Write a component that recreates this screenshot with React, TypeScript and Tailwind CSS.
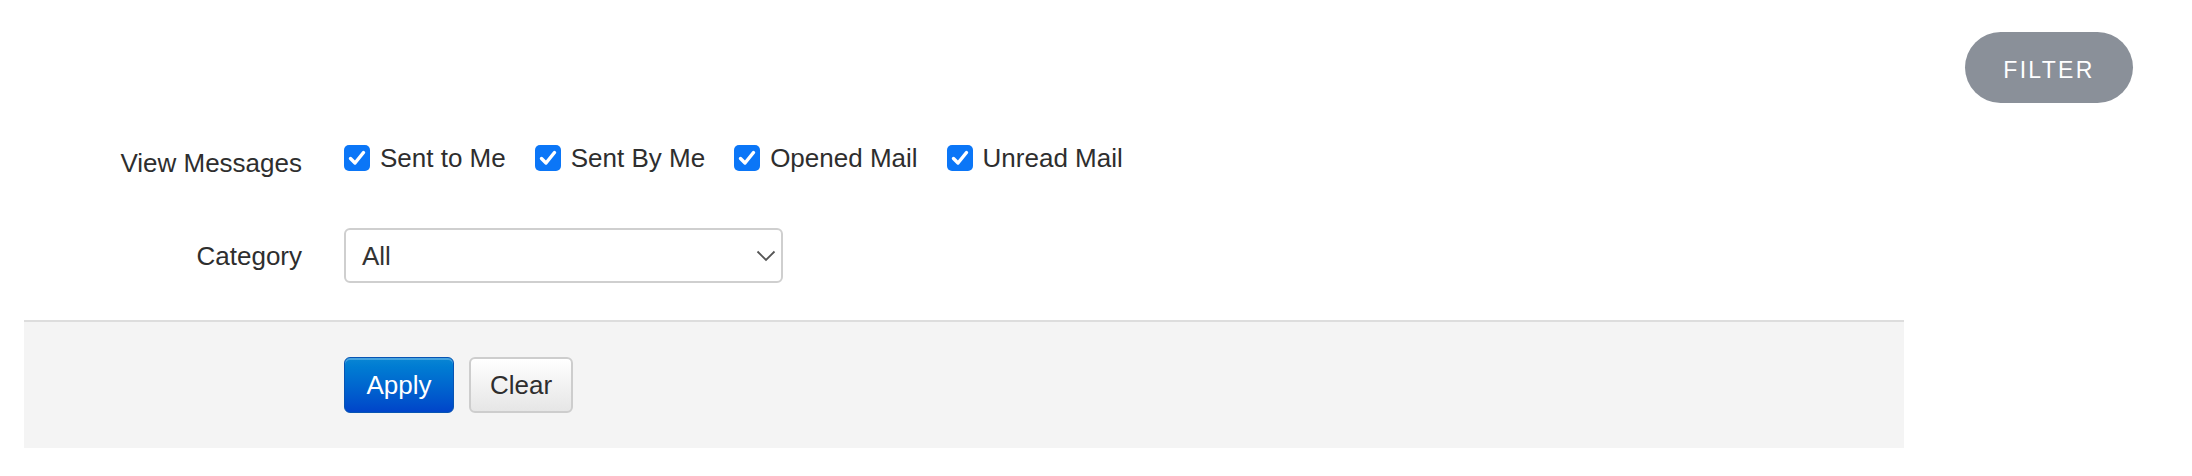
import React from 'react'

const font = { fontFamily: '"Liberation Sans", Arial, Helvetica, sans-serif' }

function Check({ label }: { label: string }) {
  return (
    <label className="mr-[29px] flex items-center">
      <span className="flex h-[26px] w-[26px] items-center justify-center rounded-[5px] bg-[#0b76f7]">
        <svg width="20" height="20" viewBox="0 0 20 20" fill="none">
          <path d="M3.5 10.5 L8 15 L16.5 4.5" stroke="#fff" strokeWidth="3.4" strokeLinecap="round" strokeLinejoin="round" />
        </svg>
      </span>
      <span className="ml-[10px] text-[26px] leading-[26px] text-[#2e2e2e]">{label}</span>
    </label>
  )
}

export default function App() {
  return (
    <div className="h-[476px] w-full bg-white" style={font}>
      <div className="flex justify-end pr-[59px] pt-[32px]">
        <button
          type="button"
          className="flex h-[71px] w-[168px] items-center justify-center rounded-full bg-[#8a9099] pt-[5px] text-[23px] tracking-[0.1em] text-white"
        >
          FILTER
        </button>
      </div>

      <div className="ml-[24px] w-[1880px]">
        <div className="mt-[42px] flex items-start">
          <div className="mt-[5px] w-[278px] text-right text-[26px] leading-[26px] text-[#2e2e2e]">View Messages</div>
          <div className="ml-[42px] flex items-center">
            <Check label="Sent to Me" />
            <Check label="Sent By Me" />
            <Check label="Opened Mail" />
            <Check label="Unread Mail" />
          </div>
        </div>

        <div className="mt-[52px] flex items-center">
          <div className="w-[278px] text-right text-[26px] leading-[26px] text-[#2e2e2e]">Category</div>
          <div className="ml-[42px] flex h-[55px] w-[439px] items-center justify-between rounded-[6px] border-2 border-[#cfcfcf] bg-white pl-[16px] pr-[5px]">
            <span className="text-[26px] leading-[26px] text-[#333]">All</span>
            <svg width="20" height="12" viewBox="0 0 20 12" fill="none">
              <path d="M1.5 1.5 L10 10 L18.5 1.5" stroke="#555" strokeWidth="1.8" />
            </svg>
          </div>
        </div>

        <div className="mt-[37px] flex h-[128px] items-center gap-[15px] border-t-2 border-[#dddddd] bg-[#f4f4f4] pl-[320px]">
          <button
            type="button"
            className="flex h-[56px] w-[110px] items-center justify-center rounded-[6px] border border-[#0754b3] bg-gradient-to-b from-[#0a86d4] to-[#0044c9] text-[26px] text-white shadow-[inset_0_2px_0_rgba(255,255,255,0.25)]"
          >
            Apply
          </button>
          <button
            type="button"
            className="flex h-[56px] w-[104px] items-center justify-center rounded-[6px] border-2 border-[#cdcdcd] bg-gradient-to-b from-white to-[#e6e6e6] text-[26px] text-[#2e2e2e]"
          >
            Clear
          </button>
        </div>
      </div>
    </div>
  )
}
